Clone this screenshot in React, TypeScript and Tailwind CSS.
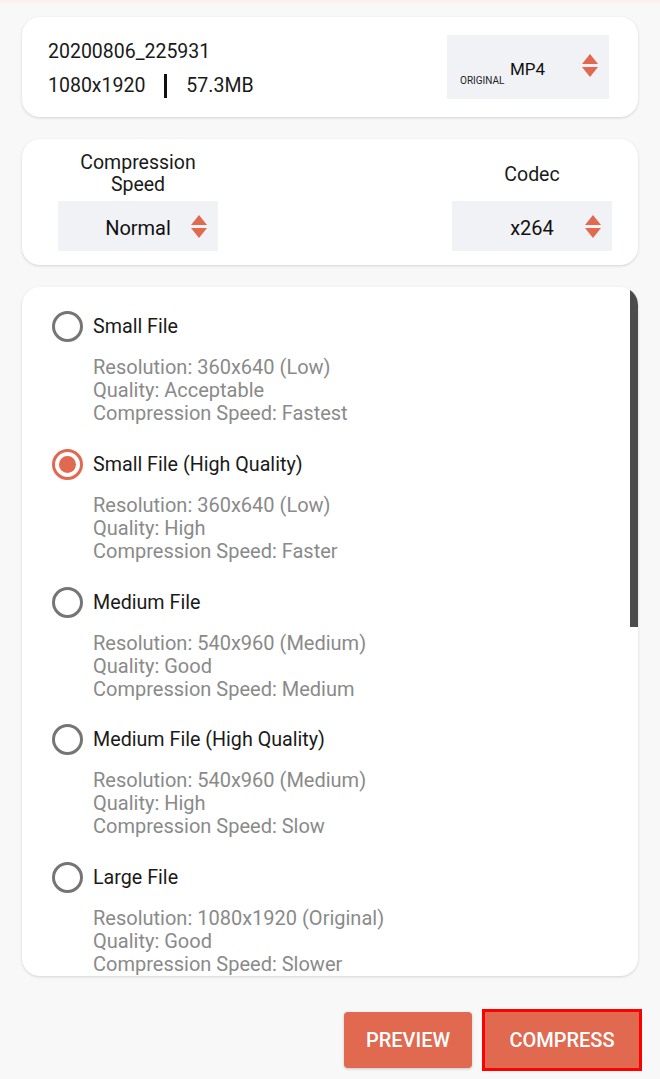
const ORANGE = "bg-[#e0694f]";

const Arrows = () => (
  <svg width="16" height="23" viewBox="0 0 16 23" className="text-[#e0694f]">
    <path d="M8 0 L16 10 L0 10 Z" fill="currentColor" />
    <path d="M0 13 L16 13 L8 23 Z" fill="currentColor" />
  </svg>
);

const options = [
  { title: "Small File", res: "360x640 (Low)", quality: "Acceptable", speed: "Fastest" },
  { title: "Small File (High Quality)", res: "360x640 (Low)", quality: "High", speed: "Faster", checked: true },
  { title: "Medium File", res: "540x960 (Medium)", quality: "Good", speed: "Medium" },
  { title: "Medium File (High Quality)", res: "540x960 (Medium)", quality: "High", speed: "Slow" },
  { title: "Large File", res: "1080x1920 (Original)", quality: "Good", speed: "Slower" },
];

const Radio = ({ checked }: { checked?: boolean }) =>
  checked ? (
    <div className="w-[31px] h-[31px] rounded-full border-[3px] border-[#e0694f] flex items-center justify-center shrink-0">
      <div className="w-[17px] h-[17px] rounded-full bg-[#e0694f]" />
    </div>
  ) : (
    <div className="w-[31px] h-[31px] rounded-full border-[3px] border-[#757575] shrink-0" />
  );

export default function App() {
  return (
    <div
      className="w-[660px] h-[1079px] bg-[#f8f8f8] border-t-[3px] border-[#fcf0f0] overflow-hidden"
      style={{ fontFamily: "Roboto, 'Liberation Sans', sans-serif" }}
    >
      {/* file info */}
      <div className="mx-[22px] mt-[14px] h-[100px] rounded-[18px] bg-white shadow-[0_1px_3px_rgba(0,0,0,0.15)] flex items-center justify-between pl-[26px] pr-[29px]">
        <div className="text-[19.5px] text-[#1a1a1a] leading-[34px] pt-[4px]">
          <div>20200806_225931</div>
          <div className="flex items-center">
            <span>1080x1920</span>
            <span className="w-[3px] h-[24px] bg-[#111] mx-[19px]" />
            <span>57.3MB</span>
          </div>
        </div>
        <div className="w-[162px] h-[64px] bg-[#f1f2f6] relative">
          <span className="absolute left-[13px] top-[41px] text-[10px] text-[#222] leading-none">ORIGINAL</span>
          <span className="absolute left-[63px] top-[26px] text-[17px] text-[#111] leading-none">MP4</span>
          <div className="absolute right-[11px] top-[19px]">
            <Arrows />
          </div>
        </div>
      </div>

      {/* compression settings */}
      <div className="mx-[22px] mt-[22px] h-[126px] rounded-[18px] bg-white shadow-[0_1px_3px_rgba(0,0,0,0.15)] flex justify-between pl-[36px] pr-[26px] pt-[9px]">
        <div className="w-[160px] flex flex-col">
          <div className="h-[50px] flex items-center justify-center text-center text-[19.5px] leading-[22px] text-[#1a1a1a] pt-[2px]">
            Compression
            <br />
            Speed
          </div>
          <div className="mt-[3px] h-[50px] bg-[#f1f2f6] relative flex items-center justify-center text-[20px] text-[#111] pt-[3px]">
            Normal
            <div className="absolute right-[11px] top-[14px]">
              <Arrows />
            </div>
          </div>
        </div>
        <div className="w-[160px] flex flex-col">
          <div className="h-[50px] flex items-center justify-center text-[19.5px] leading-[22px] text-[#1a1a1a] pt-[3px]">Codec</div>
          <div className="mt-[3px] h-[50px] bg-[#f1f2f6] relative flex items-center justify-center text-[20px] text-[#111] pt-[3px]">
            x264
            <div className="absolute right-[11px] top-[14px]">
              <Arrows />
            </div>
          </div>
        </div>
      </div>

      {/* presets */}
      <div className="mx-[22px] mt-[22px] h-[689px] rounded-[18px] bg-white shadow-[0_1px_3px_rgba(0,0,0,0.15)] relative overflow-hidden pt-[28px]">
        <div className="flex flex-col gap-[27.75px]">
          {options.map((o) => (
            <div key={o.title}>
              <div className="h-[23px] flex items-center pl-[30px] gap-[10px]">
                <Radio checked={o.checked} />
                <span className="text-[19.7px] text-[#1a1a1a] leading-[23px]">{o.title}</span>
              </div>
              <div className="mt-[18px] pl-[71px] text-[20px] leading-[23px] text-[#8a8a8a]">
                <div>Resolution: {o.res}</div>
                <div>Quality: {o.quality}</div>
                <div>Compression Speed: {o.speed}</div>
              </div>
            </div>
          ))}
        </div>
        <div className="absolute right-0 top-[3px] w-[8px] h-[337px] bg-[#4b4b4b]" />
      </div>

      {/* actions */}
      <div className="flex justify-end items-center gap-[10px] pr-[18px] mt-[33px]">
        <button className={`${ORANGE} w-[128px] h-[56px] rounded-[4px] text-white text-[20px] font-medium shadow-[0_1px_3px_rgba(0,0,0,0.2)]`}>
          PREVIEW
        </button>
        <button className={`${ORANGE} w-[160px] h-[62px] border-[3px] border-[#ff0000] text-white text-[20px] font-medium`}>
          COMPRESS
        </button>
      </div>
    </div>
  );
}
